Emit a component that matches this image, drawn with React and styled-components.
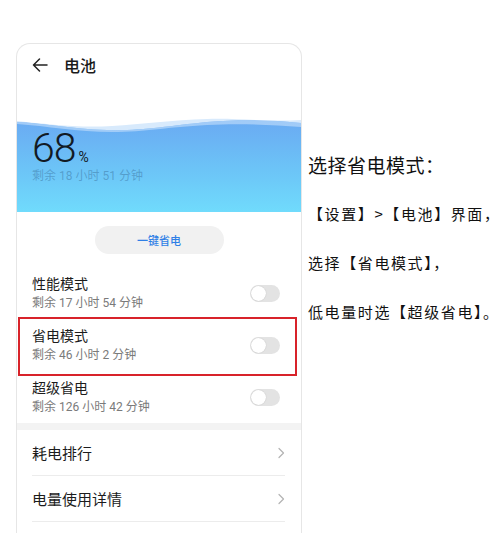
import React from 'react';
import styled, { createGlobalStyle } from 'styled-components';

const GlobalStyle = createGlobalStyle`
    html, body {
        margin: 0;
        padding: 0;
        background: #ffffff;
        overflow: hidden;
    }
    body {
        font-family: Roboto, "Noto Sans CJK SC", "Noto Sans", sans-serif;
        color: #1d1d1d;
    }
`

const Page = styled.div`
    display: flex;
    align-items: flex-start;
    width: 500px;
    height: 533px;
    overflow: hidden;
`

const Phone = styled.div`
    margin: 43px 0 0 16px;
    width: 286px;
    height: 520px;
    box-sizing: border-box;
    border: 1px solid #e6e6e6;
    border-bottom: none;
    border-radius: 14px 14px 0 0;
    background: #fff;
    display: flex;
    flex-direction: column;
    flex-shrink: 0;
    overflow: hidden;
`

const Header = styled.div`
    height: 42px;
    display: flex;
    align-items: center;
    gap: 16px;
    padding: 0 15px;
`

const Title = styled.span`
    font-size: 16px;
    font-weight: 500;
    color: #1a1a1a;
`

const Battery = styled.div`
    position: relative;
    margin-top: 32px;
    height: 94px;
    box-sizing: border-box;
    padding: 10px 15px 0;
    background: linear-gradient(180deg, #6aa9f2 0%, #6cc4f7 55%, #70dbfc 100%);
`

const Wave = styled.svg`
    position: absolute;
    left: 0;
    top: 0;
    width: 100%;
    height: 18px;
`

const Level = styled.div`
    position: relative;
    display: flex;
    align-items: baseline;
    color: #121a24;
`

const Number = styled.span`
    font-size: 41px;
    font-weight: 300;
    line-height: 40px;
    letter-spacing: -1px;
`

const Percent = styled.span`
    font-size: 14px;
    margin-left: 3px;
`

const Remain = styled.div`
    position: relative;
    margin-top: -2px;
    font-size: 12px;
    color: rgba(40, 80, 120, 0.35);
`

const SaveButton = styled.button`
    align-self: center;
    margin: 14px 0 13px;
    width: 129px;
    height: 28px;
    border: none;
    border-radius: 14px;
    background: #f1f1f1;
    color: #2f7fe6;
    font-family: inherit;
    font-size: 11px;
    font-weight: 500;
`

const ModeRow = styled.div`
    position: relative;
    height: 52px;
    box-sizing: border-box;
    padding: 7px 21px 0 15px;
    display: flex;
    align-items: center;
    justify-content: space-between;

    ${p => p.$marked && `
        &::after {
            content: '';
            position: absolute;
            top: -2px;
            bottom: -5px;
            left: 1px;
            right: 4px;
            border: 2px solid #d8232a;
        }
    `}
`

const ModeText = styled.div`
    display: flex;
    flex-direction: column;
    align-self: flex-start;
`

const ModeName = styled.span`
    font-size: 14px;
    line-height: 20px;
    color: #1c1c1c;
`

const ModeSub = styled.span`
    font-size: 12px;
    line-height: 18px;
    color: #7a7a7a;
`

const Toggle = styled.div`
    position: relative;
    width: 30px;
    height: 17px;
    margin-top: -6px;
    border-radius: 9px;
    background: #e3e3e3;

    &::before {
        content: '';
        position: absolute;
        left: 1px;
        top: 1px;
        width: 15px;
        height: 15px;
        border-radius: 50%;
        background: #fff;
        box-shadow: 0 0 1px rgba(0, 0, 0, 0.25);
    }
`

const Gap = styled.div`
    height: 7px;
    background: #f3f3f3;
`

const LinkRow = styled.div`
    height: 45px;
    margin: 0 16px 0 15px;
    display: flex;
    align-items: center;
    justify-content: space-between;
    border-bottom: 1px solid #ececec;
    font-size: 15px;
    color: #1c1c1c;
`

const Notes = styled.div`
    margin: 153px 0 0 6px;
    display: flex;
    flex-direction: column;
    gap: 25px;
    font-family: "Noto Sans CJK SC", sans-serif;
    color: #111;
    white-space: nowrap;
`

const NoteTitle = styled.div`
    font-size: 19px;
    line-height: 24px;
    font-weight: 400;
    letter-spacing: 0.5px;
`

const Note = styled.div`
    font-size: 15px;
    line-height: 24px;
    letter-spacing: 1.6px;
`

const BackArrow = () => (
    <svg width="16" height="14" viewBox="0 0 16 14" fill="none" stroke="#222" strokeWidth="1.5" strokeLinecap="round" strokeLinejoin="round">
        <path d="M15 7H1.5M7.5 1L1.5 7l6 6" />
    </svg>
);

const Chevron = () => (
    <svg width="8" height="12" viewBox="0 0 8 12" fill="none" stroke="#b3b3b3" strokeWidth="1.2" strokeLinecap="round" strokeLinejoin="round">
        <path d="M2 1.5L6.5 6 2 10.5" />
    </svg>
);

const modes = [
    { name: '性能模式', left: '剩余 17 小时 54 分钟' },
    { name: '省电模式', left: '剩余 46 小时 2 分钟', marked: true },
    { name: '超级省电', left: '剩余 126 小时 42 分钟' },
];

export default function App() {
    return (
        <Page>
            <GlobalStyle />
            <Phone>
                <Header>
                    <BackArrow />
                    <Title>电池</Title>
                </Header>
                <Battery>
                    <Wave viewBox="0 0 284 18" preserveAspectRatio="none">
                        <path d="M0 0H284V5C255 2 225 1 190 4C150 8 125 13 90 12C55 11 25 5 0 4Z" fill="#d8eafc" />
                        <path d="M0 0H284V2C250 4 222 0 190 1C155 2 125 6 95 8C60 10 30 6 0 3Z" fill="#ffffff" />
                        <path d="M0 6C30 8 60 14 95 14C130 14 150 9 190 7C225 5 255 7 284 9V5C255 2 225 1 190 4C150 8 125 13 90 12C55 11 25 5 0 4Z" fill="#b9d9fa" opacity="0.7" />
                    </Wave>
                    <Level>
                        <Number>68</Number>
                        <Percent>%</Percent>
                    </Level>
                    <Remain>剩余 18 小时 51 分钟</Remain>
                </Battery>
                <SaveButton>一键省电</SaveButton>
                {modes.map(m => (
                    <ModeRow key={m.name} $marked={m.marked}>
                        <ModeText>
                            <ModeName>{m.name}</ModeName>
                            <ModeSub>{m.left}</ModeSub>
                        </ModeText>
                        <Toggle />
                    </ModeRow>
                ))}
                <Gap />
                <LinkRow>耗电排行<Chevron /></LinkRow>
                <LinkRow>电量使用详情<Chevron /></LinkRow>
            </Phone>
            <Notes>
                <NoteTitle>选择省电模式：</NoteTitle>
                <Note>【设置】&gt;【电池】界面，</Note>
                <Note>选择【省电模式】，</Note>
                <Note>低电量时选【超级省电】。</Note>
            </Notes>
        </Page>
    );
}
